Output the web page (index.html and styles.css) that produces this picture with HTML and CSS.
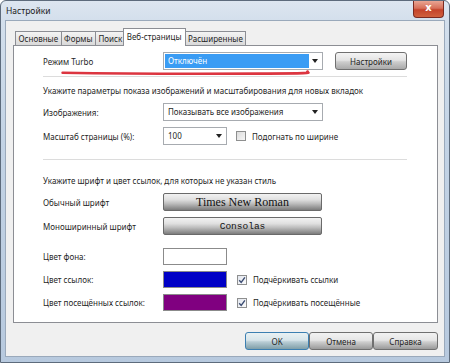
FILE: index.html
```html
<!DOCTYPE html>
<html lang="ru">
<head>
<meta charset="utf-8">
<title>Настройки</title>
<link rel="stylesheet" href="styles.css">
</head>
<body>
<div class="window">
  <div class="titlebar">
    <span class="title">Настройки</span>
    <span class="close">x</span>
  </div>
  <div class="client">
    <div class="tabs">
      <span class="tab">Основные</span>
      <span class="tab">Формы</span>
      <span class="tab">Поиск</span>
      <span class="tab active">Веб-страницы</span>
      <span class="tab">Расширенные</span>
    </div>
    <div class="panel">
      <div class="row turbo">
        <span class="label">Режим Turbo</span>
        <div class="combo combo-wide highlighted"><span class="combo-text">Отключён</span><span class="arrow"></span></div>
        <button class="btn btn-settings">Настройки</button>
      </div>
      <svg class="marker" width="290" height="7" viewBox="0 0 290 7">
        <path d="M1 3.2 C 60 4.2, 150 4.6, 230 4.2 S 282 3.4, 287 1.8" fill="none" stroke="#dc3540" stroke-width="3" stroke-linecap="round"/>
      </svg>
      <div class="sep sep-first"></div>
      <p class="caption caption-images">Укажите параметры показа изображений и масштабирования для новых вкладок</p>
      <div class="row row-images">
        <span class="label">Изображения:</span>
        <div class="combo combo-wide"><span class="combo-text">Показывать все изображения</span><span class="arrow"></span></div>
      </div>
      <div class="row row-zoom">
        <span class="label">Масштаб страницы (%):</span>
        <div class="combo combo-small"><span class="combo-text">100</span><span class="arrow"></span></div>
        <label class="check"><span class="box"></span>Подогнать по ширине</label>
      </div>
      <div class="sep sep-second"></div>
      <p class="caption caption-fonts">Укажите шрифт и цвет ссылок, для которых не указан стиль</p>
      <div class="row row-font">
        <span class="label">Обычный шрифт</span>
        <button class="fontbtn serif">Times New Roman</button>
      </div>
      <div class="row row-mono">
        <span class="label">Моноширинный шрифт</span>
        <button class="fontbtn mono">Consolas</button>
      </div>
      <div class="row row-bg">
        <span class="label">Цвет фона:</span>
        <span class="swatch swatch-white"></span>
      </div>
      <div class="row row-link">
        <span class="label">Цвет ссылок:</span>
        <span class="swatch swatch-blue"></span>
        <label class="check"><span class="box checked"><svg width="8" height="8" viewBox="0 0 8 8"><path d="M1.2 4.2 L3.2 6.4 L6.9 1.3" fill="none" stroke="#3c4d73" stroke-width="1.4"/></svg></span>Подчёркивать ссылки</label>
      </div>
      <div class="row row-visited">
        <span class="label">Цвет посещённых ссылок:</span>
        <span class="swatch swatch-purple"></span>
        <label class="check"><span class="box checked"><svg width="8" height="8" viewBox="0 0 8 8"><path d="M1.2 4.2 L3.2 6.4 L6.9 1.3" fill="none" stroke="#3c4d73" stroke-width="1.4"/></svg></span>Подчёркивать посещённые</label>
      </div>
    </div>
    <div class="actions">
      <button class="btn dlg default">OK</button>
      <button class="btn dlg">Отмена</button>
      <button class="btn dlg">Справка</button>
    </div>
  </div>
</div>
</body>
</html>
```
FILE: styles.css
```css
* { box-sizing: border-box; }
html, body { margin: 0; padding: 0; background: #fff; }
body {
  font-family: "Noto Sans", "Open Sans", sans-serif;
  font-size: 8px;
  color: #1f1f1f;
}
.window {
  width: 450px;
  height: 363px;
  border: 1px solid #5d6b7c;
  border-radius: 6px 6px 0 0;
  background: linear-gradient(180deg, #dde6f0 0px, #d3dfec 20px, #c3d3e5 140px, #b7c9de 363px);
  display: flex;
  flex-direction: column;
  overflow: hidden;
}
.titlebar {
  height: 19px;
  display: flex;
  justify-content: space-between;
  align-items: flex-start;
  padding-left: 5px;
}
.title {
  margin-top: 4px;
  font-size: 8.5px;
  color: #1c1c1c;
}
.close {
  width: 31px;
  height: 17px;
  margin-right: 5px;
  border: 1px solid #7a2a20;
  border-top: 0;
  border-radius: 0 0 4px 4px;
  background: linear-gradient(180deg, #e9a593 0%, #d7705a 45%, #c4432a 55%, #d0603d 100%);
  color: #fff;
  font-family: "DejaVu Sans", sans-serif;
  font-weight: bold;
  font-size: 10px;
  line-height: 14px;
  text-align: center;
}
.client {
  flex: 1;
  margin: 0 4px 5px 4px;
  border: 1px solid #9aa9bb;
  background: #f0f0f0;
  padding: 7px 6px 0 7px;
  display: flex;
  flex-direction: column;
}
.tabs {
  display: flex;
  align-items: flex-end;
  height: 17px;
  padding-left: 2px;
  position: relative;
  z-index: 1;
}
.tab {
  height: 14px;
  padding: 0 2.5px;
  border: 1px solid #8c8e94;
  border-bottom: 0;
  margin-right: -1px;
  background: linear-gradient(180deg, #f4f4f4 0%, #e6e6e6 50%, #d9d9d9 100%);
  line-height: 13px;
}
.tab.active {
  height: 18px;
  margin: 0 -1px -1px -2px;
  padding: 0 3px;
  background: #fff;
  line-height: 16px;
}
.panel {
  height: 278px;
  border: 1px solid #8c8e94;
  background: #fff;
  padding: 6px 30px 0 29px;
  display: flex;
  flex-direction: column;
}
.row {
  display: grid;
  grid-template-columns: 120px auto 1fr;
  align-items: center;
  height: 18px;
}
.label { white-space: nowrap; }
.combo {
  height: 18px;
  border: 1px solid #a7abb0;
  background: #fff;
  display: flex;
  align-items: center;
  padding: 1px;
}
.combo-wide { width: 160px; }
.combo-small { width: 64px; }
.combo-text {
  flex: 1;
  height: 100%;
  padding-left: 3px;
  line-height: 14px;
  white-space: nowrap;
}
.highlighted .combo-text {
  background: #3a9cf4;
  color: #fff;
}
.arrow {
  width: 12px;
  height: 100%;
  display: flex;
  align-items: center;
  justify-content: center;
}
.arrow::before {
  content: "";
  border-left: 3.5px solid transparent;
  border-right: 3.5px solid transparent;
  border-top: 4px solid #222;
}
.btn {
  font-family: inherit;
  font-size: 8px;
  color: #1f1f1f;
  height: 18px;
  padding: 0;
  border: 1px solid #707070;
  border-radius: 3px;
  background: linear-gradient(180deg, #f4f4f4 0%, #e4e4e4 45%, #cdcdcd 55%, #a9a9a9 100%);
}
.btn-settings {
  width: 72px;
  justify-self: end;
}
.marker {
  display: block;
  margin: 0 0 0 -2px;
  height: 6px;
}
.sep {
  height: 1px;
  background: #dcdcdc;
}
.caption {
  margin: 7px 0 0 0;
  line-height: 14px;
  white-space: nowrap;
}
.row-images { margin-top: 5px; }
.row-zoom { margin-top: 6px; }
.sep-second { margin-top: 14px; }
.caption-fonts { margin-top: 14px; }
.row-font { margin-top: 5px; }
.row-mono { margin-top: 6px; }
.row-bg { margin-top: 13px; height: 17px; }
.row-link { margin-top: 6px; height: 17px; }
.row-visited { margin-top: 6px; height: 17px; }
.check {
  display: flex;
  align-items: center;
  gap: 6px;
  margin-left: 9px;
  white-space: nowrap;
}
.row-link .check, .row-visited .check { margin-left: 10px; }
.box {
  width: 10px;
  height: 10px;
  border: 1px solid #8e8f8f;
  background: linear-gradient(135deg, #dcdcdc 0%, #f6f6f6 100%);
  display: flex;
  align-items: center;
  justify-content: center;
}
.box.checked { background: linear-gradient(135deg, #e2e6ee 0%, #fbfbfb 100%); }
.fontbtn {
  width: 159px;
  height: 18px;
  padding: 0;
  border: 1px solid #6a6a6a;
  border-radius: 2px;
  background: linear-gradient(180deg, #f2f2f2 0%, #e0e0e0 35%, #bdbdbd 60%, #7c7c7c 100%);
  color: #111;
}
.fontbtn.serif {
  font-family: "Liberation Serif", serif;
  font-size: 12px;
}
.fontbtn.mono {
  font-family: "Liberation Mono", monospace;
  font-size: 9.5px;
}
.swatch {
  width: 64px;
  height: 17px;
  border: 1px solid #8b8b8b;
}
.swatch-white { background: #fff; }
.swatch-blue { background: #0000c6; }
.swatch-purple { background: #800080; }
.actions {
  display: flex;
  justify-content: flex-end;
  margin-top: 9px;
}
.dlg {
  width: 64px;
  height: 18px;
  border-radius: 3px;
  background: linear-gradient(180deg, #f2f2f2 0%, #e6e6e6 45%, #cfcfcf 55%, #9a9a9a 100%);
}
.dlg:last-child { width: 65px; }
.dlg.default {
  border-color: #3c7fb1;
  background: linear-gradient(180deg, #e9f1f3 0%, #d7e5ea 45%, #b9cdd5 55%, #7f9ea8 100%);
}
```
